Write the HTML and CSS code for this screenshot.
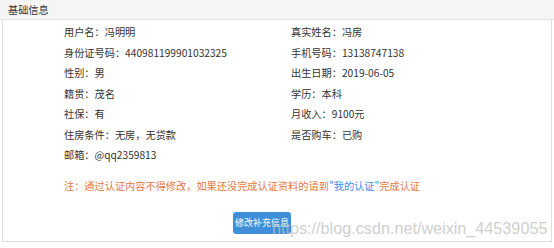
FILE: index.html
```html
<!DOCTYPE html>
<html lang="zh-CN">
<head>
<meta charset="utf-8">
<title>基础信息</title>
<link rel="stylesheet" href="styles.css">
</head>
<body>
<div class="panel">
  <div class="panel-heading">基础信息</div>
  <div class="panel-body">
    <div class="info-grid">
      <div class="item">用户名：冯明明</div>
      <div class="item">真实姓名：冯房</div>
      <div class="item">身份证号码：440981199901032325</div>
      <div class="item">手机号码：13138747138</div>
      <div class="item">性别：男</div>
      <div class="item">出生日期：2019-06-05</div>
      <div class="item">籍贯：茂名</div>
      <div class="item">学历：本科</div>
      <div class="item">社保：有</div>
      <div class="item">月收入：9100元</div>
      <div class="item">住房条件：无房，无贷款</div>
      <div class="item">是否购车：已购</div>
      <div class="item">邮箱：@qq2359813</div>
    </div>
    <p class="note">注：通过认证内容不得修改，如果还没完成认证资料的请到<a class="link">"我的认证"</a>完成认证</p>
    <div class="actions">
      <button class="btn">修改补充信息</button>
    </div>
  </div>
  <div class="watermark">https://blog.csdn.net/weixin_44539055</div>
</div>
</body>
</html>
```
FILE: styles.css
```css
* { box-sizing: border-box; }
html, body { margin: 0; padding: 0; background: #fff; }
body {
  font-family: "Noto Sans CJK SC", "Noto Sans", sans-serif;
  font-size: 10.2px;
  color: #333;
  width: 554px;
  height: 248px;
  overflow: hidden;
}
.panel { position: relative; }
.panel-heading {
  height: 20px;
  line-height: 20px;
  padding-left: 8px;
  background: #f5f5f5;
  border-bottom: 1px solid #e2e2e2;
  color: #333;
}
.panel-body {
  margin: 0 2px;
  height: 222px;
  border: 1px solid #dedede;
  border-top: none;
  padding-top: 2px;
}
.info-grid {
  display: grid;
  grid-template-columns: 227px 1fr;
  padding-left: 61px;
}
.item {
  line-height: 20.5px;
  height: 20.5px;
  white-space: nowrap;
}
.note {
  margin: 10px 0 0;
  padding-left: 61px;
  line-height: 20px;
  color: #e5793f;
  white-space: nowrap;
}
.link { color: #3d8fe6; }
.actions {
  display: flex;
  padding-left: 230px;
  margin-top: 16px;
}
.btn {
  height: 22px;
  width: 58px;
  padding: 0;
  border: none;
  border-radius: 3px;
  background: #3f8fdb;
  color: #fff;
  font-family: "Noto Sans CJK SC", sans-serif;
  font-size: 9px;
  line-height: 22px;
  text-align: center;
}
.watermark {
  position: absolute;
  left: 272px;
  top: 219px;
  font-family: "Liberation Sans", Arial, sans-serif;
  font-size: 16.2px;
  color: rgba(190, 190, 190, 0.75);
  white-space: nowrap;
}
```
